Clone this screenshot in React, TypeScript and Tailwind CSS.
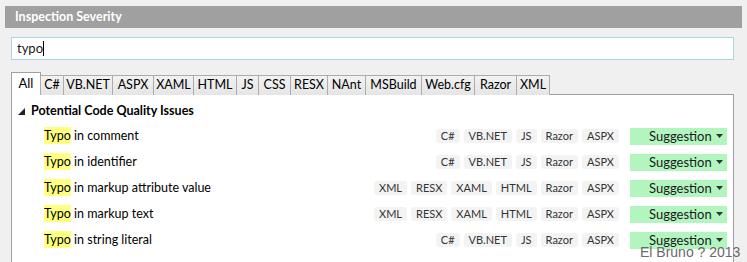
import React from 'react';

const tabs: { label: string; w: string }[] = [
  { label: 'C#', w: 'w-[24px]' },
  { label: 'VB.NET', w: 'w-[50px]' },
  { label: 'ASPX', w: 'w-[42px]' },
  { label: 'XAML', w: 'w-[41px]' },
  { label: 'HTML', w: 'w-[44px]' },
  { label: 'JS', w: 'w-[23px]' },
  { label: 'CSS', w: 'w-[33px]' },
  { label: 'RESX', w: 'w-[38px]' },
  { label: 'NAnt', w: 'w-[39px]' },
  { label: 'MSBuild', w: 'w-[57px]' },
  { label: 'Web.cfg', w: 'w-[54px]' },
  { label: 'Razor', w: 'w-[43px]' },
  { label: 'XML', w: 'w-[34px]' },
];

const codeTags = ['C#', 'VB.NET', 'JS', 'Razor', 'ASPX'];
const markupTags = ['XML', 'RESX', 'XAML', 'HTML', 'Razor', 'ASPX'];

const rows = [
  { rest: ' in comment', tags: codeTags },
  { rest: ' in identifier', tags: codeTags },
  { rest: ' in markup attribute value', tags: markupTags },
  { rest: ' in markup text', tags: markupTags },
  { rest: ' in string literal', tags: codeTags },
];

const Severity: React.FC = () => (
  <div className="flex items-center h-[17px] w-[97px] bg-[#b3f5bf] text-[13px] text-[#1a1a1a]">
    <span className="ml-[19px] leading-none">Suggestion</span>
    <svg width="7" height="4" viewBox="0 0 7 4" className="ml-auto mr-[4px]">
      <path d="M0 0 L7 0 L3.5 4 Z" fill="#333" />
    </svg>
  </div>
);

export default function App() {
  return (
    <div
      className="relative w-[747px] h-[262px] overflow-hidden bg-[#f0f0f0] pt-[6px]"
      style={{ fontFamily: 'Lato, "Open Sans", sans-serif' }}
    >
      <div className="mx-[5px] h-[22px] bg-[#a0a0a0] flex items-center pl-[10px] text-white font-bold text-[12.5px]">
        Inspection Severity
      </div>

      <div className="mt-[9px] ml-[11px] mr-[13px] h-[23px] bg-white border border-[#a9d7e6] flex items-center pl-[5px] text-[13px] text-[#1a1a1a]">
        typo<span className="inline-block w-px h-[15px] bg-black" />
      </div>

      <div className="mt-[12px] ml-[11px] mr-[13px]">
        <div className="flex items-end h-[23px] relative z-10">
          <div className="w-[30px] h-[23px] bg-white border border-b-0 border-[#a0a0a0] flex items-center justify-center text-[13px] text-black">
            All
          </div>
          {tabs.map((t) => (
            <div
              key={t.label}
              className={`${t.w} h-[20px] -ml-px first:ml-0 bg-gradient-to-b from-[#f2f2f2] to-[#e5e5e5] border border-b-0 border-[#acacac] flex items-center justify-center text-[12.5px] text-black`}
            >
              {t.label}
            </div>
          ))}
        </div>

        <div className="-mt-px h-[200px] bg-white border border-b-0 border-[#a0a0a0] pt-[4px] pr-[6px]">
          <div className="h-[24px] flex items-center text-[12.5px] font-bold text-black">
            <svg width="7" height="7" viewBox="0 0 7 7" className="ml-[6px] mr-[6px]">
              <path d="M7 0 L7 7 L0 7 Z" fill="#222" />
            </svg>
            Potential Code Quality Issues
          </div>
          {rows.map((r, i) => (
            <div key={i} className="h-[26px] flex items-center text-[12.5px] text-black">
              <span className="ml-[32px]">
                <span className="bg-[#ffff80] py-px">Typo</span>
                {r.rest}
              </span>
              <div className="ml-auto flex gap-[4px] mr-[11px]">
                {r.tags.map((t) => (
                  <span
                    key={t}
                    className="h-[14px] px-[5px] rounded-[3px] bg-[#f3f3f3] text-[11px] leading-[14px] text-[#333]"
                  >
                    {t}
                  </span>
                ))}
              </div>
              <Severity />
            </div>
          ))}
        </div>
      </div>

      <div
        className="absolute left-[640px] top-[242px] whitespace-nowrap text-[14px] text-[#6a6a6a]"
        style={{ fontFamily: '"Liberation Sans", Arial, sans-serif' }}
      >
        El Bruno ? 2013
      </div>
    </div>
  );
}
